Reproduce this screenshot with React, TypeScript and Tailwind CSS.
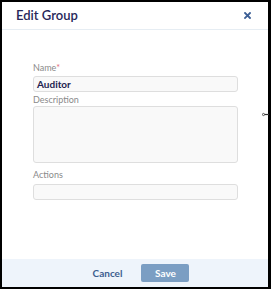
export default function App() {
  return (
    <div className="relative flex h-[289px] w-[271px] flex-col border-b-2 border-l-2 border-r-[3px] border-t-2 border-black bg-white font-['Lato',sans-serif]">
      <div className="flex h-[28px] items-center justify-between border-b border-[#e6edf3] pl-[14px] pr-[17px]">
        <h1 className="text-[13px] font-semibold leading-none text-[#27275a]">Edit Group</h1>
        <button type="button" aria-label="Close" className="text-[#3b5e95]">
          <svg width="7" height="7" viewBox="0 0 7 7">
            <path d="M1 1l5 5M6 1l-5 5" stroke="currentColor" strokeWidth="1.8" strokeLinecap="square" />
          </svg>
        </button>
      </div>

      <div className="flex flex-1 flex-col pl-[31px] pr-[30px] pt-[32px]">
        <label className="text-[9px] leading-[12px] text-[#8a8a8a]">
          Name<span className="text-[#e26b7a]">*</span>
        </label>
        <div className="mt-[2px] flex h-[16px] items-center rounded-[3px] border border-[#dedede] bg-[#f9f9f9] px-[3px] text-[10px] font-bold text-[#23234f]">
          Auditor
        </div>
        <label className="mt-[2px] text-[9px] leading-[12px] text-[#8a8a8a]">Description</label>
        <div className="h-[57px] rounded-[3px] border border-[#dedede] bg-[#f9f9f9]" />
        <label className="mt-[6px] text-[9px] leading-[12px] text-[#8a8a8a]">Actions</label>
        <div className="mt-[3px] h-[16px] rounded-[3px] border border-[#dedede] bg-[#f9f9f9]" />
      </div>

      <div className="flex h-[28px] items-center justify-center gap-[19px] bg-[#eef4fb] pl-[12px]">
        <button type="button" className="text-[10px] font-bold text-[#3d5f90]">Cancel</button>
        <button type="button" className="h-[18px] w-[48px] rounded-[2px] bg-[#7b9ec3] text-[10px] font-bold text-white">
          Save
        </button>
      </div>

      <svg className="absolute left-[260px] top-[110px]" width="7" height="5" viewBox="0 0 7 5">
        <circle cx="1.5" cy="2.5" r="1.1" fill="none" stroke="#333" strokeWidth="0.8" />
        <path d="M2.6 2.5H7" stroke="#333" strokeWidth="1.2" />
      </svg>
    </div>
  );
}
